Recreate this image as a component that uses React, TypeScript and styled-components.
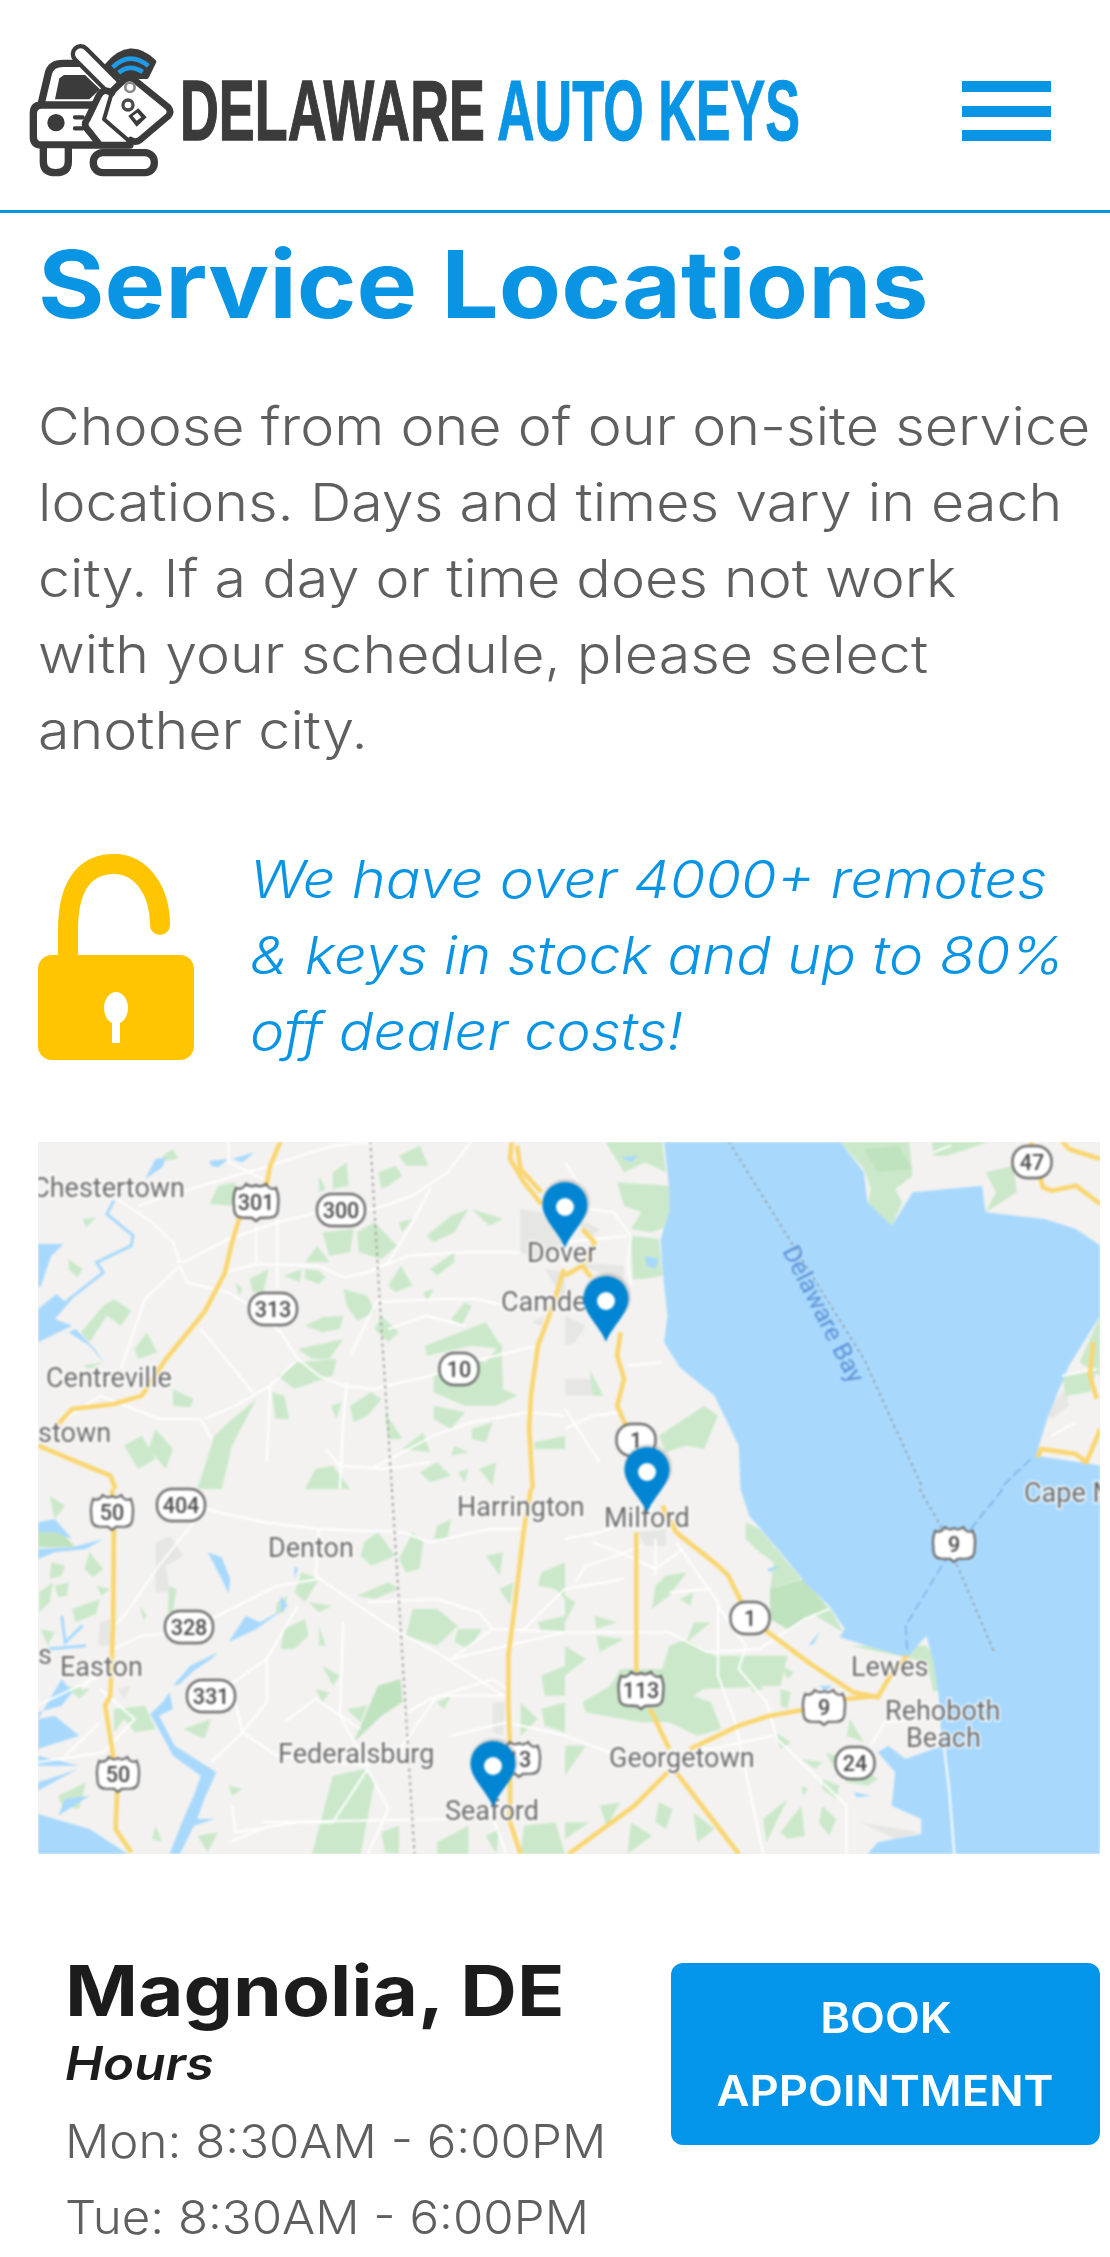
import React from "react";
import styled, { createGlobalStyle } from "styled-components";

const Global = createGlobalStyle`
  html, body { margin: 0; padding: 0; background: #fff; }
  #root { width: 1110px; height: 2257px; overflow: hidden; }
  * { box-sizing: border-box; }
`;

const Page = styled.div`
  width: 1110px;
  font-family: Inter, "Open Sans", sans-serif;
  color: #5f5f5f;
`;
const Header = styled.header`
  height: 213px;
  border-bottom: 3px solid #0a94e4;
  display: flex;
  justify-content: space-between;
  align-items: flex-start;
  padding: 30px 59px 0 0;
`;
const LogoSvg = styled.svg`
  display: block;
  filter: blur(0.6px);
`;
const Burger = styled.button`
  width: 89px;
  height: 60px;
  margin-top: 51px;
  padding: 0;
  border: 0;
  background: none;
  display: flex;
  flex-direction: column;
  justify-content: space-between;
`;
const BurgerBar = styled.span`
  display: block;
  height: 11px;
  background: #0a94e4;
`;
const Main = styled.main`
  padding: 0 10px 0 38px;
`;
/* The source face is wider than any installed one, so wide text is stretched from its left edge */
const Title = styled.h1`
  margin: 21px 0 0;
  font-size: 94px;
  line-height: 100px;
  font-weight: 700;
  color: #0a94e4;
  white-space: nowrap;
  transform-origin: left center;
  transform: scaleX(1.082);
`;
const Intro = styled.p`
  margin: 55px 0 0;
  font-size: 52px;
  line-height: 76px;
  font-weight: 300;
  white-space: nowrap;
  transform-origin: left center;
  transform: scaleX(1.104);
`;
const Promo = styled.section`
  margin-top: 73px;
  display: flex;
  align-items: center;
  gap: 55px;
`;
const LockSvg = styled.svg`
  display: block;
  flex: none;
`;
const PromoText = styled.p`
  margin: 0;
  font-size: 52px;
  line-height: 76px;
  font-weight: 300;
  font-style: italic;
  color: #0a94e4;
  white-space: nowrap;
  transform-origin: left center;
  transform: scaleX(1.11);
`;
const MapFrame = styled.div`
  margin-top: 72px;
  width: 1062px;
  height: 712px;
  overflow: hidden;
  background: #f3f2f0;
`;
const MapSvg = styled.svg`
  display: block;
  filter: blur(0.9px);
`;
const Location = styled.section`
  display: flex;
  justify-content: space-between;
  align-items: flex-start;
  padding: 95px 0 0 27px;
`;
const City = styled.h2`
  margin: 0;
  font-size: 70px;
  line-height: 84px;
  font-weight: 700;
  color: #1c1c1c;
  transform-origin: left center;
  transform: scaleX(1.12);
`;
const HoursLabel = styled.div`
  margin-bottom: 10px;
  font-size: 46px;
  line-height: 60px;
  font-weight: 600;
  font-style: italic;
  color: #1c1c1c;
  transform-origin: left center;
  transform: scaleX(1.11);
`;
const HourRow = styled.div`
  font-size: 47px;
  line-height: 76px;
  font-weight: 300;
  white-space: nowrap;
  transform-origin: left center;
  transform: scaleX(1.047);
`;
const BookButton = styled.button`
  width: 429px;
  height: 182px;
  margin-top: 14px;
  border: 0;
  border-radius: 12px;
  background: #0295ea;
  color: #fff;
  font-family: inherit;
  font-size: 42px;
  line-height: 73px;
  font-weight: 600;
  padding: 0;
`;
const BookLabel = styled.span`
  display: inline-block;
  transform: scaleX(1.08);
`;

/* map data: polygons are in the four source frames */
const FRAMES: Record<string, [number, number]> = {
  a: [20, 1130],
  b: [565, 1130],
  c: [20, 1490],
  d: [565, 1490],
};

const greens: Record<string, string[]> = {
  a: ["410,80 440,60 455,90 420,95","570,170 620,160 610,230 545,225","180,270 220,265 190,295","140,390 180,420 165,445 140,420","175,610 240,530 270,510 320,545 290,590 250,560 200,640","330,660 365,610 395,670 340,690","660,450 715,420 700,490 670,490","760,440 810,420 805,460","820,420 860,425 880,445 860,465 820,450","620,460 640,480 630,500","820,400 855,350 890,400","870,310 960,300 950,370 890,380","860,140 880,180 860,190","900,130 940,100 945,170 900,180","970,310 1020,280 1085,350 1040,390 975,370","1030,130 1080,110 1100,140 1060,170 1040,180","1090,80 1150,50 1175,110 1110,110","930,480 1000,500 1020,550 970,575 940,530","1060,470 1095,410 1130,470 1080,490","1040,560 1090,610 1060,640 1020,600","820,590 870,565 930,560 920,600 870,610","800,660 930,630 890,690 840,690","800,700 910,690 900,740 790,780 740,740","725,790 760,800 775,870 735,870","895,830 925,820 910,870","950,830 1010,790 1040,810 1000,860 960,880","1050,850 1100,930 1060,930","1165,650 1340,580 1390,660 1300,650 1170,680","1190,740 1250,670 1340,700 1385,640 1390,780 1430,800 1370,830 1280,830 1190,790","1190,830 1280,850 1240,900 1190,870","1240,570 1280,520 1300,530 1270,590","1180,420 1250,370 1250,400 1200,440","1160,490 1190,480 1170,520","1170,320 1240,260 1290,240 1250,310 1190,340","1090,280 1130,270 1100,310","1300,240 1390,270 1350,290","1300,900 1360,880 1340,940 1300,930","1480,940 1568,920 1568,960 1480,960","510,1080 560,920 600,880 680,810 610,950 580,1080","390,900 440,960 420,1020 370,960","300,950 350,920 390,990 340,1020","180,710 240,700 200,720","440,780 500,810 490,835 440,830","1100,960 1160,910 1180,970","1250,950 1290,970 1240,980","1150,1030 1200,1000 1240,1040 1180,1060","1260,1030 1290,1020 1280,1060","1320,1020 1370,1000 1360,1070","900,1010 950,1080 820,1080 850,1020"],
  b: ["115,36 280,36 290,130 230,100 170,130","150,160 300,170 300,290 250,310 190,300 220,250 170,230","190,320 270,330 280,440 230,450 195,450","790,36 990,36 1000,140 950,180 970,220 940,290 870,230 880,180 860,120","1055,36 1230,36 1100,80 1060,80","1210,130 1290,110 1300,190 1210,250 1240,190","70,720 100,780 110,800 80,800","270,920 400,830 440,860 400,960 350,950 290,970","1540,560 1480,700 1540,740","1430,740 1530,720 1510,790 1440,800"],
  c: ["85,20 130,50 100,90","200,190 240,240 210,265 185,240","90,220 130,230 120,260 85,270","55,310 95,280 85,340 55,370","100,290 140,280 135,320 110,325","150,360 230,330 220,375 160,400","220,290 260,300 235,320","60,420 100,430 80,470","345,350 365,380 355,395","430,290 450,300 440,370 425,370","740,340 770,320 760,370 735,375","810,250 860,270 820,340 790,310","830,340 900,350 860,370","760,420 820,390 830,440 790,480 750,480","860,410 880,470 860,470","990,160 1030,130 1080,200 1010,230 980,200","1130,130 1160,160 1150,240 1110,250 1090,210","1130,360 1200,360 1260,410 1200,470 1110,440","1260,420 1330,420 1290,480 1250,460","970,320 1060,280 1090,300 1020,330","1200,110 1240,90 1230,150 1190,150","1340,200 1390,190 1380,260","1380,300 1420,280 1410,350","1500,250 1568,220 1568,330 1540,300 1490,290","1490,400 1568,380 1568,430 1500,430","1500,560 1568,530 1568,620 1510,620","1500,660 1568,640 1568,730 1510,710","1440,640 1490,690 1440,740","870,530 920,560 900,590","850,600 890,610 870,640","940,660 1000,650 980,700","840,1095 900,860 990,840 1020,880 980,1095","1040,1030 1090,1010 1090,1095 1050,1090","1200,1060 1290,1010 1290,1095 1200,1095","1340,1040 1380,1020 1370,1095","1450,1010 1540,1000 1568,1095 1440,1095","1200,640 1240,620 1220,660","470,720 550,690 530,750","270,660 360,650 390,720 330,730 300,690 270,730","130,590 200,600 170,630","110,920 190,880 170,960 120,950","390,1010 410,1060 380,1050","510,1040 570,1030 540,1090","600,890 640,900 610,920"],
  d: ["520,100 560,120 680,270 590,300 600,220 560,190 520,150","590,300 690,270 770,370 800,430 720,380 640,420 590,390","50,640 130,590 160,540 280,540 300,470 350,450 430,500 640,500 620,590 400,600 370,620 420,640 450,720 380,740 300,700 220,700 110,680 60,670","85,380 150,400 90,420","90,440 170,450 100,490","260,290 290,260 350,250 300,320 250,360","330,330 370,310 360,350","370,400 420,400 350,460","620,530 660,550 640,570","620,600 650,610 640,660 620,650","530,570 570,600 540,610","605,730 650,760 620,780","0,470 60,510 0,560","0,320 30,340 0,400","680,810 740,820 720,840","750,790 780,800 770,830","740,870 790,890 780,930 740,900","680,890 700,900 685,920","820,690 860,760 810,740","800,860 870,850 900,870 870,890 810,880","620,1030 680,950 690,1040 640,1050","740,950 780,990 760,1040 730,1000","570,990 640,930 580,1060","270,940 310,960 290,1020 260,1000","370,970 430,1020 380,1060","100,950 160,940 120,1010","0,1000 70,1000 0,1050","190,1000 250,1040 180,1095","0,770 60,770 0,860","820,470 1040,470 1060,500 1075,600 1060,610 1040,520 960,500"],
};
const deepGreens: Record<string, string[]> = {
  b: ["860,60 960,50 1000,120 900,130"],
  c: ["52,125 100,110 160,175 52,175","960,760 1030,590 1095,570 1100,640 1040,680"],
  d: ["590,300 690,270 760,370 700,385 640,420 590,390"],
};
const waters: Record<string, string[]> = {
  a: ["390,90 420,85 410,115 360,150","545,95 600,90 570,115 550,110","610,90 675,70 640,100","52,345 125,345 90,380 60,470 52,475","52,540 105,495 130,520 150,510 100,570 150,590 52,640","160,600 215,660 245,705 200,650 140,610"],
  b: ["285,36 790,36 860,130 870,220 940,290 1000,190 1200,170 1210,250 1380,270 1470,300 1540,350 1540,560 1450,710 1390,860 1355,980 1480,1000 1540,1010 1540,1080 505,1080 500,950 430,800 330,715 285,640 295,560 280,420 275,330 300,250 300,180","230,380 270,390 260,420 235,410","160,85 210,80 190,100"],
  c: ["52,180 150,175 240,150 190,180 100,190 52,210","52,100 100,90 150,150 100,130 52,130","540,190 580,205 605,270 600,315 585,280 570,250","650,380 690,400 760,360 720,390 680,420 600,460","790,230 800,240 790,270","750,320 770,350 750,370","52,690 100,680 170,740 80,770 52,780","120,570 150,610 120,650 52,670 52,690","52,975 200,1020 310,1095 52,1095","375,675 410,640 430,610 440,660 400,680 445,770 490,800 565,850 530,930 510,990 560,990 500,1010 460,1095 430,1095 470,990 500,920 520,860 440,800 420,760","52,800 170,830 52,830","52,880 170,840 130,860 52,905","130,930 200,920 140,960 110,980","440,590 490,530 570,490 550,510 500,545 460,585"],
  d: ["505,0 530,80 620,190 690,280 760,350 805,420 790,445 900,480 985,505 1040,440 1060,520 1075,620 1085,770 980,810 930,770 900,790 950,850 940,950 1025,990 1025,1035 900,1060 870,1095 1540,1095 1540,0","580,240 620,230 590,250","700,470 735,425 715,465","730,590 770,590 750,605","830,910 880,920 840,925"],
};
const urbans: Record<string, string[]> = {
  a: ["1440,240 1500,250 1568,340 1500,400 1440,370","1510,420 1568,430 1568,520","1470,580 1510,560 1500,590"],
  b: ["0,260 60,280 100,300 80,320","30,400 170,410 170,460 140,470 120,440","0,560 60,590 30,640 0,650","0,750 70,750 110,800 50,800 0,800","1380,850 1440,780 1450,830 1400,870"],
  c: ["390,160 430,140 470,200 420,230 430,310 390,310","230,400 260,390 260,470 225,470","280,600 320,590 300,630","1360,640 1395,640 1390,740 1360,730"],
  d: ["210,130 290,120 290,170 230,170","850,1000 1020,1030 950,1050"],
};
const whites: Record<string, string[]> = {
  a: ["M340 230 L520 170 L720 110 L900 50 L1008 40","M450 400 L470 400 L600 330 L630 320 L740 280 L860 250 L1020 240 L1130 200 L1230 130 L1300 36","M460 400 L440 340 L380 280 L280 210","M600 36 L600 100 L700 150","M460 410 L480 460 L600 490 L660 530 L750 610 L800 690 L860 740 L930 770 L1020 780 L1180 740 L1330 690 L1490 650","M460 410 L360 510 L330 600 L290 720","M590 430 L680 405 L860 410 L930 445 L1000 430 L1120 380 L1270 370 L1440 370","M740 270 L740 480","M680 290 L680 400","M1030 520 L1200 510 L1310 510 L1400 530","M1060 600 L1170 560 L1280 590","M940 760 L930 880 L920 1080","M950 680 L1030 510","M530 870 L620 830 L720 770 L790 700","M130 870 L230 800 L400 870 L520 870 L550 930","M720 770 L710 1000","M1010 1020 L1190 920 L1300 880 L1460 850 L1568 860","M880 960 L920 1010 L1050 1020 L1180 1000","M520 600 L600 700 L670 790","M1180 180 L1130 280 L1060 400 L1000 430"],
  b: ["M0 100 L50 180 L70 240 L140 250 L190 320 L180 400 L190 470","M0 340 L180 320","M180 710 L280 700","M0 900 L80 860 L160 850","M0 840 L100 1000","M1060 70 L1110 50","M1430 740 L1530 720","M1400 920 L1470 880"],
  c: ["M530 60 L700 100 L860 120 L1100 130 L1180 160 L1350 120 L1450 120","M860 120 L850 260 L960 340 L1090 430 L1200 490 L1390 620","M1000 340 L1200 330 L1320 370 L1360 420 L1568 430 L1240 510 L1360 420","M530 60 L400 230 L300 380 L270 410 L270 480 L350 440 L480 430","M230 560 L50 650","M270 490 L180 600","M550 390 L740 290 L860 270","M600 590 L710 510 L760 420 L800 350","M710 510 L710 640 L640 730 L550 820","M620 640 L640 730 L740 800 L1000 830 L1100 770 L1200 620 L1400 620","M930 400 L920 680 L1000 830","M760 700 L850 630 L980 720","M1000 840 L900 1000 L800 1000 L620 1030 L610 950","M700 1000 L1240 990","M1000 840 L1060 960 L1000 1095","M600 1060 L720 1010","M52 820 L240 790 L330 690 L230 600","M230 700 L130 800","M1100 680 L1180 630 L1360 570 L1400 600","M1240 740 L1400 700 L1568 740","M1350 960 L1400 1095","M1440 430 L1568 300"],
  d: ["M0 150 L100 130 L210 90","M0 430 L180 430 L300 430 L410 490 L560 480 L690 390 L760 360","M260 150 L260 260","M320 160 L440 340 L440 560 L490 700 L570 1095","M440 350 L520 470 L500 540 L580 640 L610 750 L710 850 L810 950 L810 1095","M30 280 L60 230 L150 200 L220 170","M0 300 L170 270","M300 310 L420 300","M80 160 L180 200 L260 240 L340 180","M0 740 L130 790","M360 780 L420 780 L600 740","M880 770 L920 700 L1030 690","M1090 770 L1105 900 L1120 1095"],
};
const yellows: Record<string, string[]> = {
  a: ["M750 36 L720 110 L710 165 L630 270 L610 340 L590 430 L530 550 L420 690 L350 800 L270 825 L150 840 L110 885","M52 950 L190 1010 L260 1040 L275 1080","M1415 36 L1410 90 L1450 160 L1500 225","M1430 50 L1440 120 L1500 190","M1565 420 L1530 540 L1490 650 L1470 800 L1465 900 L1475 1080"],
  b: ["M0 440 L50 410 L75 445","M50 300 L85 340 L60 400","M160 610 L150 680 L170 750 L150 830 L175 890","M1540 90 L1450 60 L1430 36","M1340 36 L1375 175 L1400 185 L1470 170 L1540 225","M1360 985 L1370 960 L1470 975 L1500 1000 L1540 900","M1520 640 L1510 740 L1530 810"],
  c: ["M265 0 L270 120 L268 400 L260 620 L245 650 L265 780 L280 900 L275 1020 L320 1090","M1470 0 L1450 120 L1420 380 L1405 500 L1405 650 L1410 780 L1410 1000 L1440 1095"],
  d: ["M280 50 L320 130 L440 230 L470 260 L530 387 L700 520 L830 610 L900 625 L930 570 L985 500","M205 130 L205 550","M245 660 L300 780","M360 780 L500 710 L590 680 L700 660 L810 630 L900 620","M295 850 L200 950 L10 1095","M320 850 L500 1095"],
};

const dotted: [string, string][] = [
  ["a", "M1008 36 L1020 250 L1040 600 L1070 1080"],
  ["c", "M1070 0 L1100 500 L1135 1095"],
  ["b", "M470 36 L860 690 L1030 1080"],
  ["d", "M1020 0 L1075 100 L1235 490"],
];
const ferry: [string, string][] = [
  ["d", "M1260 0 L1090 220 L980 410 L985 490"],
  ["b", "M1340 990 L1250 1080"],
];

type Kind = "us" | "oval";
const shields: { x: number; y: number; t: string; k: Kind; w: number }[] = [
  { x: 256, y: 1203, t: "301", k: "us", w: 47 },
  { x: 341, y: 1211, t: "300", k: "oval", w: 48 },
  { x: 273, y: 1310, t: "313", k: "oval", w: 48 },
  { x: 459, y: 1370, t: "10", k: "oval", w: 39 },
  { x: 1032, y: 1163, t: "47", k: "oval", w: 39 },
  { x: 636, y: 1441, t: "1", k: "oval", w: 39 },
  { x: 112, y: 1513, t: "50", k: "us", w: 44 },
  { x: 181, y: 1506, t: "404", k: "oval", w: 48 },
  { x: 189, y: 1628, t: "328", k: "oval", w: 48 },
  { x: 211, y: 1697, t: "331", k: "oval", w: 48 },
  { x: 118, y: 1775, t: "50", k: "us", w: 44 },
  { x: 519, y: 1760, t: "13", k: "us", w: 44 },
  { x: 641, y: 1691, t: "113", k: "us", w: 47 },
  { x: 824, y: 1708, t: "9", k: "us", w: 44 },
  { x: 954, y: 1545, t: "9", k: "us", w: 44 },
  { x: 750, y: 1619, t: "1", k: "oval", w: 39 },
  { x: 855, y: 1764, t: "24", k: "oval", w: 39 },
];

const labels: { x: number; y: number; t: string; a?: "start" | "end" }[] = [
  { x: 185, y: 1198, t: "Chestertown", a: "end" },
  { x: 46, y: 1388, t: "Centreville" },
  { x: 38, y: 1443, t: "stown" },
  { x: 527, y: 1263, t: "Dover" },
  { x: 501, y: 1312, t: "Camden" },
  { x: 457, y: 1517, t: "Harrington" },
  { x: 604, y: 1528, t: "Milford" },
  { x: 268, y: 1558, t: "Denton" },
  { x: 38, y: 1665, t: "s" },
  { x: 60, y: 1677, t: "Easton" },
  { x: 278, y: 1764, t: "Federalsburg" },
  { x: 445, y: 1821, t: "Seaford" },
  { x: 609, y: 1768, t: "Georgetown" },
  { x: 851, y: 1677, t: "Lewes" },
  { x: 885, y: 1721, t: "Rehoboth" },
  { x: 906, y: 1748, t: "Beach" },
  { x: 1024, y: 1503, t: "Cape M" },
];

const pins: [number, number][] = [
  [565, 1183],
  [606, 1277],
  [647, 1448],
  [493, 1742],
];

const framePaint = (
  data: Record<string, string[]>,
  render: (v: string, i: number) => React.ReactNode
) =>
  Object.entries(data).map(([k, list]) => (
    <g
      key={k}
      transform={`translate(${FRAMES[k][0]},${FRAMES[k][1]}) scale(0.34758,0.33333)`}
    >
      {list.map(render)}
    </g>
  ));

const Shield = ({ x, y, t, k, w }: { x: number; y: number; t: string; k: Kind; w: number }) => (
  <g transform={`translate(${x},${y})`}>
    {k === "us" ? (
      <path
        transform={`scale(${w / 47})`}
        d="M-20 -14 C-16 -12 -12 -14 -10 -18 C-6 -15 -3 -15 0 -17 C3 -15 6 -15 10 -18 C12 -14 16 -12 20 -14 C23 -7 23 -2 22 4 C22 12 20 15 14 15.5 L4 16 L0 19 L-4 16 L-14 15.5 C-20 15 -22 12 -22 4 C-23 -2 -23 -7 -20 -14Z"
        fill="#fff"
        stroke="#6a6a6a"
        strokeWidth="2.4"
      />
    ) : (
      <rect x={-w / 2} y={-16} width={w} height={32} rx={15} fill="#fff" stroke="#6a6a6a" strokeWidth="2.4" />
    )}
    <text x="0" y="8" textAnchor="middle" fontFamily="Roboto, sans-serif" fontSize="21.5" fontWeight="500" fill="#4a4a4a">
      {t}
    </text>
  </g>
);

const MapPin = ({ x, y }: { x: number; y: number }) => (
  <g transform={`translate(${x},${y})`}>
    <circle cx="1" cy="21" r="24" fill="#8b8b8b" opacity="0.3" />
    <path d="M0 66 C-6 50 -22.5 38 -22.5 22.5 A22.5 22.5 0 0 1 22.5 22.5 C22.5 38 6 50 0 66Z" fill="#0285d2" />
    <circle cx="0" cy="25" r="9" fill="#fff" />
  </g>
);

const ServiceMap = () => (
  <MapSvg width="1062" height="712" viewBox="38 1143 1062 712">
    <rect x="38" y="1143" width="1062" height="712" fill="#f3f2f0" />
    {framePaint(urbans, (p, i) => <polygon key={i} points={p} fill="#e6e6e4" />)}
    {framePaint(greens, (p, i) => <polygon key={i} points={p} fill="#cbe9ca" />)}
    {framePaint(deepGreens, (p, i) => <polygon key={i} points={p} fill="#bfe3be" />)}
    {framePaint(waters, (p, i) => <polygon key={i} points={p} fill="#a8d9fd" />)}
    {framePaint(
      { a: ["M270 215 L250 255 L325 320 L320 350 L220 400 L240 430 L130 520"], c: ["M120 380 L130 460 L180 410", "M190 470 L80 480"] },
      (p, i) => <path key={i} d={p} fill="none" stroke="#a8d9fd" strokeWidth="3" vectorEffect="non-scaling-stroke" />
    )}
    {framePaint(whites, (p, i) => <path key={i} d={p} fill="none" stroke="#fff" strokeWidth="2" vectorEffect="non-scaling-stroke" />)}
    {framePaint(yellows, (p, i) => <path key={i} d={p} fill="none" stroke="#fad670" strokeWidth="4.6" strokeLinejoin="round" vectorEffect="non-scaling-stroke" />)}
    {dotted.map(([k, d], i) => (
      <path
        key={i}
        transform={`translate(${FRAMES[k][0]},${FRAMES[k][1]}) scale(0.34758,0.33333)`}
        d={d}
        fill="none"
        stroke="#9a9a9a"
        strokeWidth="1.8"
        strokeDasharray="3 4"
        vectorEffect="non-scaling-stroke"
      />
    ))}
    {ferry.map(([k, d], i) => (
      <path
        key={i}
        transform={`translate(${FRAMES[k][0]},${FRAMES[k][1]}) scale(0.34758,0.33333)`}
        d={d}
        fill="none"
        stroke="#7fb0e6"
        strokeWidth="1.6"
        strokeDasharray="10 4"
        vectorEffect="non-scaling-stroke"
      />
    ))}
    {labels.map((l) => (
      <text
        key={l.t}
        x={l.x}
        y={l.y}
        textAnchor={l.a ?? "start"}
        fontFamily="Roboto, sans-serif"
        fontSize="27"
        fill="#6b6b6b"
        stroke="#fff"
        strokeOpacity="0.85"
        strokeWidth="3"
        paintOrder="stroke"
      >
        {l.t}
      </text>
    ))}
    <text
      transform="translate(782,1252) rotate(63)"
      fontFamily="Roboto, sans-serif"
      fontSize="25"
      fill="#5d90d6"
    >
      Delaware Bay
    </text>
    {shields.map((s) => (
      <Shield key={`${s.t}${s.x}`} {...s} />
    ))}
    {pins.map(([x, y]) => (
      <MapPin key={x} x={x} y={y} />
    ))}
  </MapSvg>
);

const Logo = () => (
  <LogoSvg width="810" height="160" viewBox="0 30 810 160">
    <g transform="translate(0,30) scale(0.3333)">
      <g fill="none" stroke="#3b3b3b" strokeWidth="22" strokeLinecap="round" strokeLinejoin="round">
        <path d="M125 215 L145 130 Q152 100 190 100 L235 100" />
        <path d="M280 225 H125 Q100 225 100 250 V320 Q100 345 125 345 H390" fill="#fff" />
        <path d="M130 355 V395 Q130 428 167 428 Q205 428 205 395 V355" fill="#fff" />
        <rect x="280" y="368" width="183" height="60" rx="28" fill="#fff" />
      </g>
      <polygon points="165,208 178,145 192,135 255,135 300,178 268,208" fill="#3b3b3b" />
      <circle cx="168" cy="278" r="26" fill="#3b3b3b" />
      <path d="M225 262 H248 M225 295 H248" stroke="#3b3b3b" strokeWidth="13" strokeLinecap="round" />
      <path d="M242 72 L335 165" stroke="#3b3b3b" strokeWidth="60" strokeLinecap="round" />
      <path d="M242 72 L335 165" stroke="#fff" strokeWidth="34" strokeLinecap="round" />
      <path d="M322 105 Q390 25 462 95 L440 140 L350 140Z" fill="#3b3b3b" stroke="#3b3b3b" strokeWidth="14" strokeLinejoin="round" />
      <path d="M338 112 Q390 62 445 108" fill="none" stroke="#1f9be6" strokeWidth="14" />
      <path d="M356 128 Q390 100 428 126" fill="none" stroke="#1f9be6" strokeWidth="14" />
      <path
        d="M372 150 Q388 138 404 150 L505 232 Q516 245 505 258 L420 330 Q406 340 392 330 L385 345 L300 345 L260 295 Q250 282 262 268 L295 200 Q310 170 335 190 L340 180Z"
        fill="#fff"
        stroke="#3b3b3b"
        strokeWidth="20"
        strokeLinejoin="round"
      />
      <path d="M335 190 L312 268 L390 335" fill="none" stroke="#3b3b3b" strokeWidth="12" strokeLinejoin="round" />
      <circle cx="390" cy="172" r="14" fill="#fff" stroke="#8a8a8a" strokeWidth="8" />
      <circle cx="384" cy="225" r="15" fill="none" stroke="#4a4a4a" strokeWidth="10" />
      <polygon points="385,258 415,235 440,262 410,290" fill="#3b3b3b" />
      <polygon points="398,258 412,248 424,262 410,272" fill="#fff" />
    </g>
    <text x="180" y="140" fontFamily="'Liberation Sans', sans-serif" fontWeight="700" fontSize="85" fill="#3b3b3b" stroke="#3b3b3b" strokeWidth="1.4" textLength="305" lengthAdjust="spacingAndGlyphs">
      DELAWARE
    </text>
    <text x="497" y="140" fontFamily="'Liberation Sans', sans-serif" fontWeight="700" fontSize="85" fill="#0a94e4" stroke="#0a94e4" strokeWidth="1" textLength="303" lengthAdjust="spacingAndGlyphs">
      AUTO KEYS
    </text>
  </LogoSvg>
);

const Padlock = () => (
  <LockSvg width="157" height="207" viewBox="39 853 157 207">
    <path d="M69 955 V930 C69 880 90 864 115 864 C142 864 161 890 161 925" fill="none" stroke="#fec500" strokeWidth="20" strokeLinecap="round" />
    <rect x="39" y="955" width="156" height="105" rx="14" fill="#fec500" />
    <ellipse cx="117" cy="1008" rx="12" ry="16" fill="#fff" />
    <rect x="113" y="1010" width="8" height="33" fill="#fff" />
  </LockSvg>
);

export default function App() {
  return (
    <Page>
      <Global />
      <Header>
        <Logo />
        <Burger aria-label="Menu">
          <BurgerBar />
          <BurgerBar />
          <BurgerBar />
        </Burger>
      </Header>
      <Main>
        <Title>Service Locations</Title>
        <Intro>
          Choose from one of our on-site service
          <br />
          locations. Days and times vary in each
          <br />
          city. If a day or time does not work
          <br />
          with your schedule, please select
          <br />
          another city.
        </Intro>
        <Promo>
          <Padlock />
          <PromoText>
            We have over 4000+ remotes
            <br />
            &amp; keys in stock and up to 80%
            <br />
            off dealer costs!
          </PromoText>
        </Promo>
        <MapFrame>
          <ServiceMap />
        </MapFrame>
        <Location>
          <div>
            <City>Magnolia, DE</City>
            <HoursLabel>Hours</HoursLabel>
            <HourRow>Mon: 8:30AM - 6:00PM</HourRow>
            <HourRow>Tue: 8:30AM - 6:00PM</HourRow>
          </div>
          <BookButton>
            <BookLabel>BOOK</BookLabel>
            <br />
            <BookLabel>APPOINTMENT</BookLabel>
          </BookButton>
        </Location>
      </Main>
    </Page>
  );
}
